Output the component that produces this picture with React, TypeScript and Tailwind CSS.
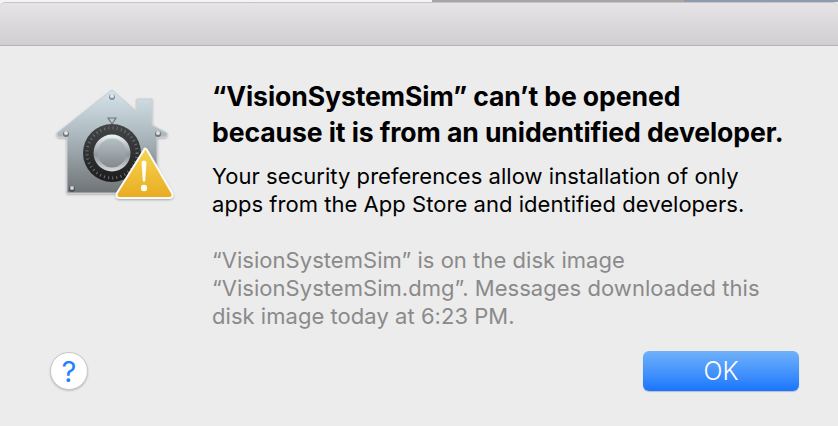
import React from "react";

function GatekeeperIcon() {
  return (
    <svg width="150" height="140" viewBox="0 0 150 140" className="block">
      <defs>
        <linearGradient id="house" x1="0" y1="0" x2="0" y2="1">
          <stop offset="0" stopColor="#d6e4eb" />
          <stop offset="0.45" stopColor="#abb7bd" />
          <stop offset="1" stopColor="#6f7376" />
        </linearGradient>
        <linearGradient id="ring" x1="0" y1="0" x2="0" y2="1">
          <stop offset="0" stopColor="#444648" />
          <stop offset="1" stopColor="#1c1c1d" />
        </linearGradient>
        <linearGradient id="knob" x1="0" y1="0" x2="0" y2="1">
          <stop offset="0" stopColor="#f2f5f6" />
          <stop offset="0.55" stopColor="#8f979b" />
          <stop offset="1" stopColor="#d8dcde" />
        </linearGradient>
        <linearGradient id="knobIn" x1="0" y1="0" x2="0" y2="1">
          <stop offset="0" stopColor="#b4c0c4" />
          <stop offset="1" stopColor="#84898c" />
        </linearGradient>
        <linearGradient id="warn" x1="0" y1="0" x2="0" y2="1">
          <stop offset="0" stopColor="#f6d651" />
          <stop offset="1" stopColor="#e9ab22" />
        </linearGradient>
        <filter id="soft" x="-20%" y="-20%" width="140%" height="140%">
          <feDropShadow dx="0" dy="1" stdDeviation="1" floodColor="#000" floodOpacity="0.3" />
        </filter>
      </defs>
      <path
        d="M72 15 L97 37 L97 24 L112 24 L112 50 L127 58 Q128 61 125 62 L117 62 L117 118 L27 118 L27 62 L19 62 Q16 61 17 58 Z"
        fill="url(#house)"
        stroke="#c6ced2"
        strokeWidth="1"
        strokeLinejoin="round"
        filter="url(#soft)"
      />
      <circle cx="72" cy="22" r="3" fill="#888e92" />
      <circle cx="72" cy="21" r="2" fill="#e4e8ea" />
      <circle cx="26" cy="59" r="3" fill="#70767a" />
      <circle cx="26" cy="58" r="2" fill="#dfe3e5" />
      <circle cx="118" cy="59" r="3" fill="#70767a" />
      <circle cx="118" cy="58" r="2" fill="#dfe3e5" />
      <circle cx="32" cy="114" r="3" fill="#4e5255" />
      <circle cx="32" cy="113" r="2" fill="#cfd3d5" />
      <path d="M68 43 H76 L72 49 Z" fill="none" stroke="#71777b" strokeWidth="1.2" />
      <circle cx="72" cy="78" r="29" fill="url(#ring)" />
      <circle cx="72" cy="78" r="25" fill="none" stroke="#6d6f71" strokeWidth="3" strokeDasharray="1 3.2" />
      <circle cx="72" cy="78" r="18.5" fill="url(#knob)" />
      <circle cx="72" cy="78" r="14.5" fill="url(#knobIn)" />
      <path
        d="M104 75 Q104.500 72 107 75 L132 118 Q134 123 129 123 L80 123 Q75 123 77 118 Z"
        fill="url(#warn)"
        stroke="#fbfbf7"
        strokeWidth="2"
        strokeLinejoin="round"
        filter="url(#soft)"
      />
      <path d="M101.5 87 Q104 84 106.500 87 L105.200 106 Q104 107.500 102.800 106 Z" fill="#fffdf5" />
      <circle cx="104" cy="113" r="3.200" fill="#fffdf5" />
    </svg>
  );
}

export default function App() {
  return (
    <div className="w-[838px] h-[426px] overflow-hidden bg-[#ececec] flex flex-col font-['Inter','Liberation_Sans',sans-serif]">
      <div className="h-[2px] flex shrink-0">
        <div className="w-[432px] bg-[#f4f4f4]" />
        <div className="w-[252px] bg-[#a9a7a6]" />
        <div className="flex-1 bg-[#8f9cad]" />
      </div>
      <div className="h-[44px] shrink-0 rounded-t-[6px] border-t border-[#c4c4c4] border-b border-b-[#b4b4b4] bg-gradient-to-b from-[#e6e4e6] to-[#d0ced0]" />
      <div className="flex-1 flex flex-col">
        <div className="flex pl-[40px]">
          <div className="w-[172px] shrink-0 pt-[29px]">
            <GatekeeperIcon />
          </div>
          <div className="flex-1 pt-[32px]">
            <h1 className="text-[26.6px] leading-[36px] font-bold text-black tracking-[-0.1px] whitespace-nowrap">
              “VisionSystemSim” can’t be opened
              <br />
              because it is from an unidentified developer.
            </h1>
            <p className="mt-[12px] text-[22px] leading-[28px] text-black tracking-[0.04px] whitespace-nowrap">
              Your security preferences allow installation of only
              <br />
              apps from the App Store and identified developers.
            </p>
            <p className="mt-[28px] text-[22px] leading-[28px] text-[#8a8a8a] tracking-[0.04px] whitespace-nowrap">
              “VisionSystemSim” is on the disk image
              <br />
              “VisionSystemSim.dmg”. Messages downloaded this
              <br />
              disk image today at 6:23 PM.
            </p>
          </div>
        </div>
        <div className="flex items-center justify-between pl-[50px] pr-[39px] mt-[21px]">
          <button className="w-[38px] h-[38px] rounded-full bg-white border border-[#c8c8c8] shadow-[0_1px_2px_rgba(0,0,0,0.2)] flex items-center justify-center text-[#1f82fb] text-[29px] font-normal leading-none">
            ?
          </button>
          <button className="w-[156px] h-[40px] rounded-[6px] bg-gradient-to-b from-[#6fb1fa] to-[#1775fd] shadow-[0_1px_1px_rgba(0,0,0,0.2)] text-white text-[25px] font-light leading-none flex items-center justify-center">
            OK
          </button>
        </div>
      </div>
    </div>
  );
}
